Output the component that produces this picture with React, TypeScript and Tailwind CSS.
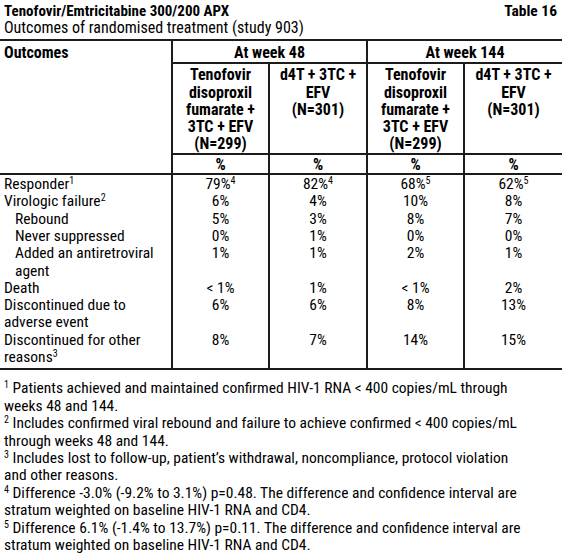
import React from "react";

interface Row {
  label: React.ReactNode;
  indent?: boolean;
  values: React.ReactNode[];
}

// raised note number that does not grow the line box
const Sup = ({ n }: { n: number }) => (
  <span className="relative -top-[5px] text-[10px] leading-none">{n}</span>
);

const rows: Row[] = [
  { label: <>Responder<Sup n={1} /></>, values: [<>79%<Sup n={4} /></>, <>82%<Sup n={4} /></>, <>68%<Sup n={5} /></>, <>62%<Sup n={5} /></>] },
  { label: <>Virologic failure<Sup n={2} /></>, values: ["6%", "4%", "10%", "8%"] },
  { label: "Rebound", indent: true, values: ["5%", "3%", "8%", "7%"] },
  { label: "Never suppressed", indent: true, values: ["0%", "1%", "0%", "0%"] },
  { label: <>Added an antiretroviral<br />agent</>, indent: true, values: ["1%", "1%", "2%", "1%"] },
  { label: "Death", values: ["< 1%", "1%", "< 1%", "2%"] },
  { label: <>Discontinued due to<br />adverse event</>, values: ["6%", "6%", "8%", "13%"] },
  { label: <>Discontinued for other<br />reasons<Sup n={3} /></>, values: ["8%", "7%", "14%", "15%"] },
];

const footnotes: { n: number; text: React.ReactNode }[] = [
  { n: 1, text: <>Patients achieved and maintained confirmed HIV-1 RNA &lt; 400 copies/mL through<br />weeks 48 and 144.</> },
  { n: 2, text: <>Includes confirmed viral rebound and failure to achieve confirmed &lt; 400 copies/mL<br />through weeks 48 and 144.</> },
  { n: 3, text: <>Includes lost to follow-up, patient’s withdrawal, noncompliance, protocol violation<br />and other reasons.</> },
  { n: 4, text: <>Difference -3.0% (-9.2% to 3.1%) p=0.48. The difference and confidence interval are<br />stratum weighted on baseline HIV-1 RNA and CD4.</> },
  { n: 5, text: <>Difference 6.1% (-1.4% to 13.7%) p=0.11. The difference and confidence interval are<br />stratum weighted on baseline HIV-1 RNA and CD4.</> },
];

export default function App() {
  const line = "border-[#1c1c1c]";
  const hd = "font-bold text-[16px]";
  return (
    <div className="w-[562px] h-[556px] bg-white text-black overflow-hidden font-['Roboto_Condensed','Liberation_Sans',sans-serif]">
      {/* heading */}
      <div className="px-1 pt-[3px]">
        <div className="flex justify-between items-baseline">
          <span className="text-[15px] font-bold leading-[17px]">Tenofovir/Emtricitabine 300/200 APX</span>
          <span className="text-[15.5px] font-bold leading-[17px] pr-[1px]">Table 16</span>
        </div>
        <div className="text-[16px] leading-[17px] -mt-[1px]">Outcomes of randomised treatment (study 903)</div>
      </div>

      <table className={`mt-[3px] w-full table-fixed border-collapse border-y-2 ${line} text-[15.5px] leading-[17.3px]`}>
        <colgroup>
          <col className="w-[172px]" />
          <col className="w-[97px]" />
          <col className="w-[98px]" />
          <col className="w-[97px]" />
          <col className="w-[98px]" />
        </colgroup>
        <thead>
          <tr>
            <th rowSpan={2} className={`border-r-2 ${line} text-left align-top px-1 pt-[3px] ${hd}`}>Outcomes</th>
            <th colSpan={2} className={`border-r-2 border-b-2 ${line} pt-[3px] pb-[1px] ${hd}`}>At week 48</th>
            <th colSpan={2} className={`border-b-2 ${line} pt-[3px] pb-[1px] ${hd}`}>At week 144</th>
          </tr>
          <tr>
            <th className={`border-r-2 border-b-2 ${line} align-top pt-[2px] ${hd}`}>Tenofovir<br />disoproxil<br />fumarate +<br />3TC + EFV<br />(N=299)</th>
            <th className={`border-r-2 border-b-2 ${line} align-top pt-[2px] ${hd}`}>d4T + 3TC +<br />EFV<br />(N=301)</th>
            <th className={`border-r-2 border-b-2 ${line} align-top pt-[2px] ${hd}`}>Tenofovir<br />disoproxil<br />fumarate +<br />3TC + EFV<br />(N=299)</th>
            <th className={`border-b-2 ${line} align-top pt-[2px] ${hd}`}>d4T + 3TC +<br />EFV<br />(N=301)</th>
          </tr>
          <tr className={`border-b-2 ${line}`}>
            <th className={`border-r-2 ${line}`}></th>
            <th className={`border-r-2 ${line} pt-[1px] ${hd}`}>%</th>
            <th className={`border-r-2 ${line} pt-[1px] ${hd}`}>%</th>
            <th className={`border-r-2 ${line} pt-[1px] ${hd}`}>%</th>
            <th className={`pt-[1px] ${hd}`}>%</th>
          </tr>
        </thead>
        <tbody>
          {rows.map((r, i) => {
            const first = i === 0;
            const last = i === rows.length - 1;
            const pad = `${first ? "pt-[1px]" : ""} ${last ? "pb-[2px]" : ""}`;
            return (
              <tr key={i}>
                <td className={`border-r-2 ${line} align-top ${r.indent ? "pl-[15px]" : "pl-1"} ${pad}`}>{r.label}</td>
                {r.values.map((v, j) => (
                  <td key={j} className={`${j < 3 ? `border-r-2 ${line}` : ""} align-top text-center ${pad}`}>{v}</td>
                ))}
              </tr>
            );
          })}
        </tbody>
      </table>

      <div className="px-1 pt-[10px] text-[15.5px] leading-[17.4px] whitespace-nowrap">
        {footnotes.map((f) => (
          <p key={f.n}>
            <Sup n={f.n} /> {f.text}
          </p>
        ))}
      </div>
    </div>
  );
}
